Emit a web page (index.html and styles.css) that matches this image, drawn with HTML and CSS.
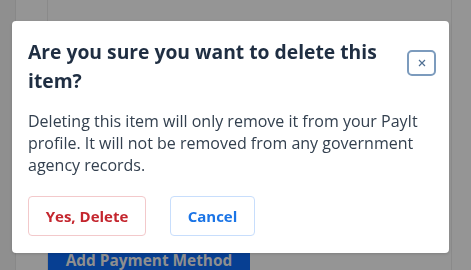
FILE: index.html
```html
<!DOCTYPE html>
<html>
<head>
<meta charset="utf-8">
<link rel="stylesheet" href="styles.css">
</head>
<body>
<div class="page">
  <div class="rail"></div>
  <div class="main">
    <div class="panel">
      <div class="panel-fill"></div>
      <button class="add-btn">Add Payment Method</button>
    </div>
  </div>
</div>
<div class="modal" role="dialog">
  <div class="modal-head">
    <h2 class="modal-title">Are you sure you want to delete this item?</h2>
    <button class="close-btn" aria-label="Close">
      <svg width="10" height="10" viewBox="0 0 10 10"><path d="M2 2L8 8M8 2L2 8" stroke="#4f6f93" stroke-width="1.2" fill="none"/></svg>
    </button>
  </div>
  <p class="modal-text">Deleting this item will only remove it from your PayIt profile. It will not be removed from any government agency records.</p>
  <div class="modal-actions">
    <button class="btn btn-danger">Yes, Delete</button>
    <button class="btn btn-cancel">Cancel</button>
  </div>
</div>
</body>
</html>
```

FILE: styles.css
```css
html, body {
  margin: 0;
  padding: 0;
  width: 471px;
  height: 270px;
  overflow: hidden;
  background: #959595;
  font-family: "Open Sans", "Noto Sans", sans-serif;
}
.page {
  display: flex;
  height: 270px;
}
.rail {
  width: 15px;
  background: #8f8f8f;
  border-right: 1px solid #888888;
}
.main {
  flex: 1;
  display: flex;
  padding-left: 31px;
}
.panel {
  width: 403px;
  border-left: 1px solid #8a8a8a;
  border-right: 1px solid #8a8a8a;
  display: flex;
  flex-direction: column;
  background: #959595;
}
.panel-fill {
  flex: 1;
}
.add-btn {
  align-self: flex-start;
  width: 202px;
  height: 18px;
  border: none;
  background: #073f92;
  color: #8f8f8f;
  font-family: "Open Sans", sans-serif;
  font-weight: 700;
  font-size: 15.4px;
  line-height: 18px;
  padding: 0;
  display: flex;
  align-items: flex-start;
  justify-content: center;
}
.modal {
  position: fixed;
  left: 12px;
  top: 21px;
  width: 437px;
  height: 232px;
  box-sizing: border-box;
  background: #ffffff;
  border-radius: 4px;
  padding: 16px 13px 0 16px;
  box-shadow: 0 1px 3px rgba(0,0,0,0.15);
}
.modal-head {
  display: flex;
  align-items: flex-start;
  justify-content: space-between;
}
.modal-title {
  margin: 0;
  width: 370px;
  font-size: 19.3px;
  line-height: 29px;
  font-weight: 700;
  color: #1f2e42;
}
.close-btn {
  margin-top: 13px;
  width: 29px;
  height: 26px;
  box-sizing: border-box;
  border: 2px solid #7c9bbd;
  border-radius: 5px;
  background: #ffffff;
  padding: 0;
  display: flex;
  align-items: center;
  justify-content: center;
}
.modal-text {
  margin: 15px 0 0 0;
  font-size: 16px;
  line-height: 22px;
  color: #33404f;
  width: 400px;
}
.modal-actions {
  display: flex;
  gap: 24px;
  margin-top: 20px;
}
.btn {
  height: 40px;
  box-sizing: border-box;
  border-radius: 4px;
  background: #ffffff;
  font-family: "Open Sans", sans-serif;
  font-weight: 700;
  font-size: 15px;
  padding: 0;
}
.btn-danger {
  width: 118px;
  border: 1px solid #f3c9cb;
  color: #c4262e;
}
.btn-cancel {
  width: 85px;
  border: 1px solid #c8defc;
  color: #1a74e6;
}
```
